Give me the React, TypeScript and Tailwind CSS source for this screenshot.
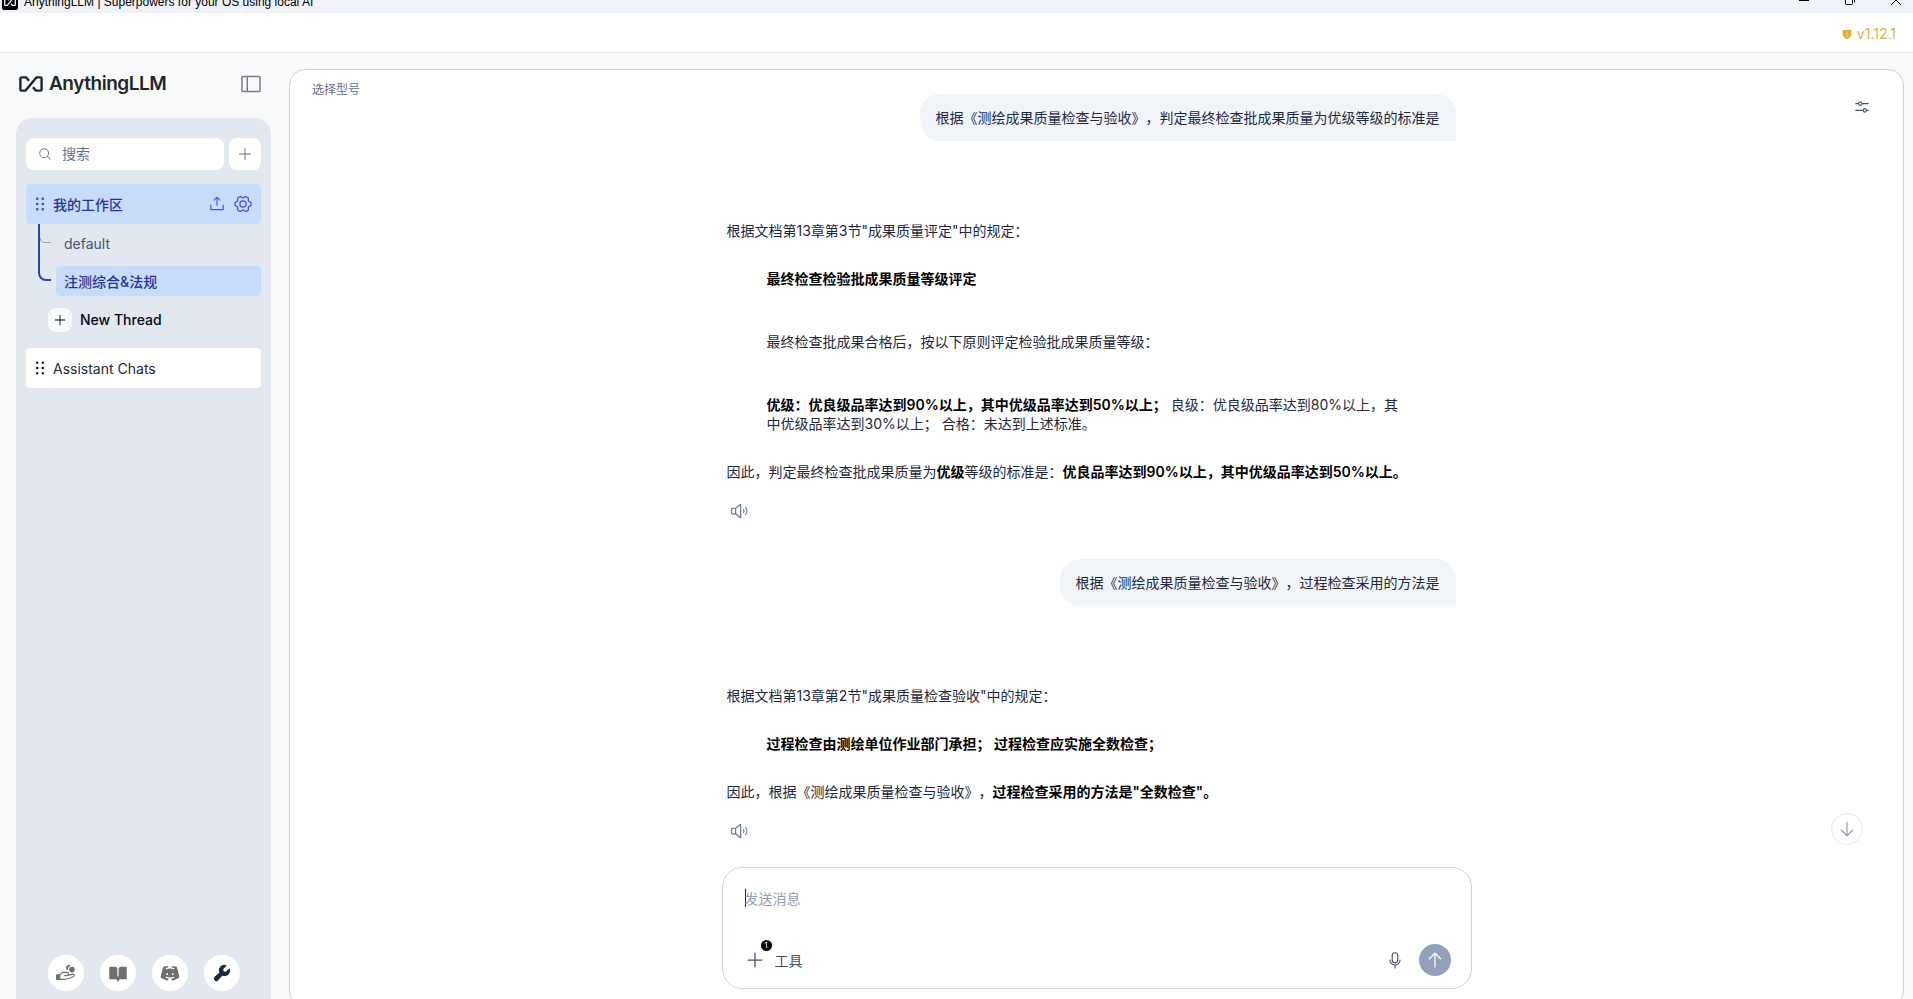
import React, { useState } from 'react';
import {
    PiArrowDown, PiArrowUp, PiBookOpenFill, PiDiscordLogoFill, PiDotsSixVerticalBold, PiGearSix, PiHandCoinsFill,
    PiMagnifyingGlass, PiMicrophone, PiPlus, PiShieldWarningFill, PiSidebarSimple, PiSlidersHorizontal,
    PiSpeakerHigh, PiUploadSimple, PiWrenchFill,
} from 'react-icons/pi';

const Mark: React.FC<{ className: string }> = ({ className }) => (
    <svg viewBox="0 0 24 16" className={className} fill="none" stroke="currentColor" strokeWidth="2.4" strokeLinejoin="round">
        <path d="M10 4.8 7.2 1.4H2.6A1.200 1.200 0 0 0 1.400 2.600V13.400A1.200 1.200 0 0 0 2.600 14.600H6.600L17.400 1.400H21.400A1.200 1.200 0 0 1 22.600 2.600V13.400A1.200 1.200 0 0 1 21.400 14.600H16.800L14 11.200" />
    </svg>
);

const TitleBar = () => (
    <div className="h-[13px] shrink-0 bg-[#f0f2fa] flex items-end">
        <div className="h-[22px] w-full flex items-center pl-0.5 pr-3 text-black">
            <span className="w-4 h-4 rounded-xs bg-black text-white flex items-center justify-center">
                <Mark className="w-3 h-2" />
            </span>
            <span className="ml-1.5 text-xs font-['Liberation_Sans',sans-serif]">AnythingLLM | Superpowers for your OS using local AI</span>
            <div className="ml-auto flex items-center gap-9 pb-1">
                <svg className="w-[10px] h-[10px]" viewBox="0 0 10 10" stroke="currentColor" fill="none"><path d="M0 5.5H10" /></svg>
                <svg className="w-[10px] h-[10px]" viewBox="0 0 10 10" stroke="currentColor" fill="none">
                    <rect x=".5" y="2.5" width="7" height="7" rx="1" /><path d="M2.5.5H8A1.5 1.5 0 0 1 9.5 2V7.5" />
                </svg>
                <svg className="w-[10px] h-[10px]" viewBox="0 0 10 10" stroke="currentColor" fill="none"><path d="M0 0 10 10M10 0 0 10" /></svg>
            </div>
        </div>
    </div>
);

const footerLinks = [
    { label: 'Sponsor', icon: PiHandCoinsFill, color: 'text-[#6e706f]' },
    { label: 'Docs', icon: PiBookOpenFill, color: 'text-[#6e706f]' },
    { label: 'Discord', icon: PiDiscordLogoFill, color: 'text-[#6e706f]' },
    { label: 'Settings', icon: PiWrenchFill, color: 'text-[#1e293b]' },
];

const Sidebar = () => (
    <aside className="w-[255px] ml-4 shrink-0 flex flex-col">
        <div className="h-[65px] shrink-0 flex items-center justify-between pl-[3px] pr-2 pb-1 text-[#222628]">
            <div className="flex items-center gap-1.5">
                <Mark className="w-6 h-4" />
                <span className="text-[19px] leading-6 font-semibold tracking-tight">AnythingLLM</span>
            </div>
            <button aria-label="Toggle sidebar" className="text-[#7c7f82]"><PiSidebarSimple size={24} /></button>
        </div>

        <div className="flex-1 bg-[#e2e8f0] rounded-t-2xl px-2.5 pt-5 pb-2 flex flex-col">
            <div className="flex gap-[5px]">
                <label className="flex-1 min-w-0 h-8 bg-white rounded-lg flex items-center pl-3 gap-2.5">
                    <PiMagnifyingGlass size={14} className="shrink-0 text-[#6e706f]" />
                    <input type="text" aria-label="搜索" placeholder="搜索" className="w-full min-w-0 text-sm outline-none placeholder:text-slate-500" />
                </label>
                <button aria-label="New workspace" className="w-8 h-8 bg-white rounded-lg flex items-center justify-center text-slate-500"><PiPlus size={16} /></button>
            </div>

            <div className="mt-3.5 h-10 rounded bg-[#c7dbfb] flex items-center px-2 text-[#27348b]">
                <PiDotsSixVerticalBold size={20} className="-ml-1 mr-[3px] shrink-0 text-[#3538cd]" />
                <a href="#workspace" className="flex-1 pt-0.5 text-sm font-medium">我的工作区</a>
                <button aria-label="Upload" className="mr-[7px] text-[#444ce7]"><PiUploadSimple size={18} /></button>
                <button aria-label="Workspace settings" className="text-[#444ce7]"><PiGearSix size={20} /></button>
            </div>

            <div className="relative flex flex-col">
                <svg className="absolute left-3 top-0 w-4 h-[60px]" viewBox="0 0 16 60" fill="none">
                    <path d="M2.5 14C2.5 17 4 18.5 7 18.5H13" stroke="#94a3b8" />
                    <path d="M1 0V49A7 7 0 0 0 8 56H13" stroke="#2b3fae" strokeWidth="2" />
                </svg>
                <a href="#default" className="h-10 pl-[38px] flex items-center text-sm text-slate-600">default</a>
                <a href="#thread" className="mt-0.5 ml-[30px] h-[30px] pl-2 pt-0.5 rounded bg-[#c7dbfb] flex items-center text-sm font-medium text-[#27348b]">注测综合&法规</a>
                <button className="mt-3 ml-[22px] flex items-center gap-2 text-sm font-medium text-slate-950">
                    <span className="w-6 h-6 rounded-lg bg-slate-50 flex items-center justify-center"><PiPlus size={14} /></span>
                    New Thread
                </button>
            </div>

            <div className="mt-4 h-10 rounded bg-white flex items-center px-2 text-sm text-slate-800">
                <PiDotsSixVerticalBold size={20} className="-ml-1 mr-[3px] shrink-0 text-black" />
                <a href="#assistant" className="pt-0.5">Assistant Chats</a>
            </div>

            <div className="mt-auto flex justify-center gap-4">
                {footerLinks.map(({ label, icon: Icon, color }) => (
                    <button key={label} aria-label={label} className="w-9 h-9 rounded-full bg-white flex items-center justify-center">
                        <Icon size={20} className={color} />
                    </button>
                ))}
            </div>
        </div>
    </aside>
);

const Question: React.FC<{ children: React.ReactNode }> = ({ children }) => (
    <div className="self-end mr-4 px-4 py-3.5 rounded-[20px] rounded-br-none bg-slate-100">{children}</div>
);

const Answer: React.FC<{ children: React.ReactNode }> = ({ children }) => (
    <div className="mt-20 ml-[5px] mr-[27px] flex flex-col gap-[29px]">
        {children}
        <button aria-label="Read aloud" className="-mt-2 ml-[3px] self-start text-slate-500"><PiSpeakerHigh size={18} /></button>
    </div>
);

const B: React.FC<{ children: React.ReactNode }> = ({ children }) => <strong className="font-semibold text-black">{children}</strong>;

const Composer = () => {
    const [message, setMessage] = useState('');

    return (
        <form className="h-[122px] shrink-0 border border-slate-300 rounded-[20px] bg-white px-5 pt-[21px] pb-3 flex flex-col justify-between">
            <div className="flex items-start pl-0.5">
                <span className="w-px h-[18px] bg-slate-800" />
                <textarea
                    rows={1}
                    aria-label="发送消息"
                    placeholder="发送消息"
                    value={message}
                    onChange={e => setMessage(e.target.value)}
                    className="flex-1 -ml-px resize-none outline-none placeholder:text-slate-400"
                />
            </div>
            <div className="flex items-center text-slate-600">
                <button type="button" aria-label="Attach" className="ml-0.5 relative">
                    <PiPlus size={20} />
                    <span className="absolute -top-2.5 -right-[7px] w-[11px] h-[11px] rounded-full bg-black text-white text-[8px] leading-[11px] text-center">1</span>
                </button>
                <button type="button" className="ml-2.5">工具</button>
                <button type="button" aria-label="Dictate" className="ml-auto mr-[15px]"><PiMicrophone size={18} /></button>
                <button type="submit" aria-label="Send" className="w-8 h-8 rounded-full bg-slate-400 text-white flex items-center justify-center"><PiArrowUp size={20} /></button>
            </div>
        </form>
    );
};

const App: React.FC = () => {
    return (
        <div className="h-screen overflow-hidden flex flex-col bg-slate-50 font-[Inter,'Noto_Sans_CJK_SC',sans-serif] [text-spacing-trim:space-all]">
            <TitleBar />
            <header className="h-10 shrink-0 bg-white border-b border-gray-200 flex items-center justify-end pr-[17px] pt-0.5 text-sm text-[#dab23f]">
                <a href="#version" className="flex items-center gap-1"><PiShieldWarningFill size={12} />v1.12.1</a>
            </header>

            <div className="flex-1 min-h-0 flex">
                <Sidebar />

                <main className="relative flex-1 min-w-0 ml-[18px] mr-[9px] mt-4 -mb-2 bg-white border border-[#cfd2d5] rounded-2xl text-sm leading-[19px] text-slate-800">
                    <button className="absolute top-3 left-[22px] text-xs text-slate-500">选择型号</button>
                    <button aria-label="Chat settings" className="absolute top-7 right-8 text-slate-600"><PiSlidersHorizontal size={18} /></button>

                    {/* conversation */}
                    <div className="max-w-[750px] h-full mx-auto flex flex-col pt-6 pb-[17px]">
                        <Question>根据《测绘成果质量检查与验收》，判定最终检查批成果质量为优级等级的标准是</Question>
                        <Answer>
                            <p>根据文档第13章第3节"成果质量评定"中的规定：</p>
                            <blockquote className="mx-10 flex flex-col gap-11">
                                <p><B>最终检查检验批成果质量等级评定</B></p>
                                <p>最终检查批成果合格后，按以下原则评定检验批成果质量等级：</p>
                                <p><B>优级：优良级品率达到90%以上，其中优级品率达到50%以上；</B> 良级：优良级品率达到80%以上，其中优级品率达到30%以上； 合格：未达到上述标准。</p>
                            </blockquote>
                            <p>因此，判定最终检查批成果质量为<B>优级</B>等级的标准是：<B>优良品率达到90%以上，其中优级品率达到50%以上。</B></p>
                        </Answer>

                        <div className="h-[39px] shrink-0" />
                        <Question>根据《测绘成果质量检查与验收》，过程检查采用的方法是</Question>
                        <Answer>
                            <p>根据文档第13章第2节"成果质量检查验收"中的规定：</p>
                            <blockquote className="mx-10"><B>过程检查由测绘单位作业部门承担； 过程检查应实施全数检查；</B></blockquote>
                            <p>因此，根据《测绘成果质量检查与验收》，<B>过程检查采用的方法是"全数检查"。</B></p>
                        </Answer>

                        <div className="flex-1" />
                        <Composer />
                    </div>

                    <button aria-label="Scroll to bottom" className="absolute right-10 bottom-[161px] w-8 h-8 rounded-full bg-white border border-gray-200 text-slate-400 flex items-center justify-center">
                        <PiArrowDown size={20} />
                    </button>
                </main>
            </div>
        </div>
    );
};

export default App;
